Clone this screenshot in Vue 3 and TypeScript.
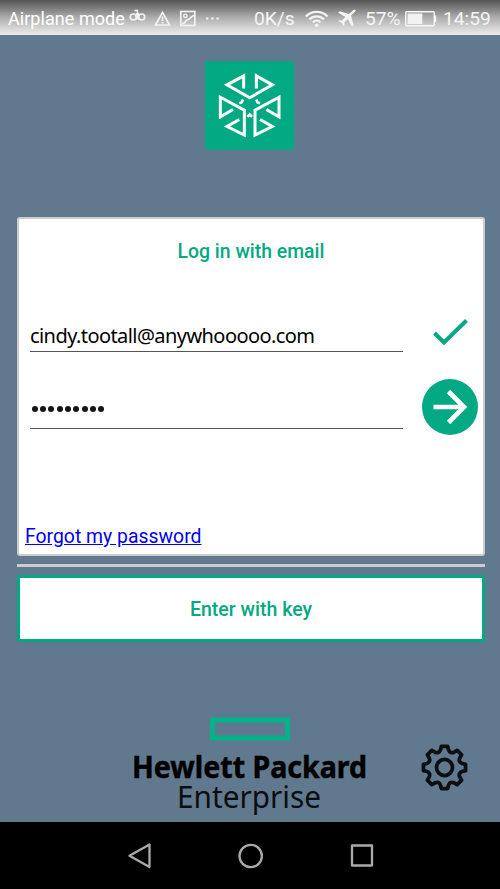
<script setup lang="ts">
import { ref } from 'vue'

const email = ref<string>('cindy.tootall@anywhooooo.com')
const passwordLength = ref<number>(9)
const batteryLevel = ref<number>(57)

function polar(radius: number, degrees: number): string {
  const a = (degrees * Math.PI) / 180
  return `${(radius * Math.sin(a)).toFixed(2)} ${(-radius * Math.cos(a)).toFixed(2)}`
}

// Eight-toothed cog outline, centred on the origin.
function cogPath(): string {
  let d = ''
  for (let k = 0; k < 8; k++) {
    const a = k * 45
    d += `${k === 0 ? 'M' : 'L'}${polar(62.5, a - 8.5)} L${polar(62.5, a + 8.5)} L${polar(53, a + 13)} `
    d += `Q${polar(43, a + 22.5)} ${polar(53, a + 32)} `
  }
  return d + 'Z'
}
const cog: string = cogPath()
</script>

<template>
  <div class="screen">
    <header class="status">
      <span class="carrier">Airplane mode</span>
      <svg class="notices" viewBox="128 4 96 28" width="96" height="28" fill="none" stroke="#f1f1f1" stroke-width="1.7">
        <circle cx="133.3" cy="16" r="3" />
        <circle cx="141.7" cy="16" r="3" />
        <path d="M134.500 9.500h3v8.500M138.500 12v7M136.500 12v7" stroke-width="1.300" />
        <path d="M162.500 11.500L169.500 24H155.500Z" />
        <path d="M162.500 15.500v4.500M162.500 21v1.500" />
        <rect x="180.800" y="10.500" width="14" height="14" />
        <circle cx="185.300" cy="14.800" r="1.700" stroke-width="1.400" />
        <path d="M182 23c4-1 3-4 6-4.500s3-4 6.500-4" />
        <path d="M206 17.500h2.400M211.200 17.500h2.400M216.400 17.500h2.400" stroke-width="2.200" />
      </svg>
      <span class="rate">0K/s</span>
      <svg class="radio" viewBox="304 4 56 28" width="56" height="28" fill="none" stroke="#f3f3f3" stroke-width="2.200">
        <path d="M305.800 15.500a15.200 15.200 0 0 1 21.800 0M309.300 18.500a10.500 10.500 0 0 1 14.800 0M312.800 21.200a5.800 5.800 0 0 1 7.800 0" />
        <circle cx="316.700" cy="24.200" r="1.800" fill="#f3f3f3" stroke="none" />
        <path d="M355.500 9.200c-1-.8-2.200-.2-3.200.7l-3.300 3.100-9.300-2.700-1.500 1.500 7.200 4.200-3.400 3.600-2.700-.4-1 1 3.600 1.600 1.600 3.500 1.100-1-.3-2.800 3.600-3.300 4.100 7.200 1.500-1.500-2.500-9.300 3.200-3.200c1-1 1.800-1.400 1.300-2.200Z" fill="#f3f3f3" stroke="none" />
      </svg>
      <span class="percent">{{ batteryLevel }}%</span>
      <svg class="battery" viewBox="0 0 32 16" width="32" height="16">
        <rect x="0.700" y="0.700" width="28.600" height="14.100" rx="1" fill="none" stroke="#f7f7f7" stroke-width="1.400" />
        <rect x="2.500" y="2.500" :width="batteryLevel * 0.26" height="10.500" fill="#f2f2f2" />
        <rect x="29.700" y="4.500" width="1.500" height="6.500" fill="#f7f7f7" />
      </svg>
      <span class="clock">14:59</span>
    </header>

    <main class="content">
      <svg class="app-logo" viewBox="30 28 267 266" width="89" height="89">
        <rect x="30" y="28" width="267" height="266" fill="#03a982" />
        <g fill="none" stroke="#fff" stroke-width="9">
          <path d="M146 110V72L96 99L164 138L232 99L184 72V110" />
          <path d="M114 173L76 195V136L148 175V250L96 224L133 203" />
          <path d="M214 173L252 195V136L180 175V250L232 224L195 203" />
          <path d="M133 154L140 152L144 143M195 154L188 152L184 143M157 195L164 188L171 195" stroke-width="8" />
        </g>
      </svg>

      <section class="card">
        <h1 class="title"><span>Log in with email</span></h1>
        <div class="row first">
          <div class="field"><span class="email">{{ email }}</span></div>
          <svg class="check" viewBox="0 0 36 28" width="36" height="28">
            <path d="M1.500 15L11 24.500L33.500 2.500" fill="none" stroke="#03a982" stroke-width="4" />
          </svg>
        </div>
        <div class="row second">
          <div class="field">
            <span class="dots"><i v-for="n in passwordLength" :key="n"></i></span>
          </div>
          <svg class="go" viewBox="0 0 56 56" width="56" height="56">
            <circle cx="28" cy="28" r="28" fill="#03a982" />
            <path d="M11.500 28H42M26.500 12.500L42 28L26.500 43.500" fill="none" stroke="#fff" stroke-width="4.600" />
          </svg>
        </div>
        <a class="forgot">Forgot my password</a>
      </section>

      <div class="divider"></div>
      <button class="key"><span>Enter with key</span></button>

      <footer class="footer">
        <svg class="brand" viewBox="0 0 260 119" width="260" height="119">
          <rect x="92.500" y="15" width="75" height="18" fill="none" stroke="#01b388" stroke-width="5" />
          <text class="strong" x="12" y="73" textLength="235" lengthAdjust="spacingAndGlyphs">Hewlett Packard</text>
          <text class="light" x="57" y="103" textLength="144" lengthAdjust="spacingAndGlyphs">Enterprise</text>
        </svg>
        <svg class="settings" viewBox="-69 -69 138 138" width="47" height="47">
          <path :d="cog" fill="none" stroke="#0c0f11" stroke-width="11" stroke-linejoin="round" />
          <circle r="23.500" fill="none" stroke="#0c0f11" stroke-width="11" />
        </svg>
      </footer>
    </main>

    <nav class="nav">
      <svg viewBox="0 0 26 28" width="26" height="28"><path d="M22.500 2.500V25L2.500 13.750Z" /></svg>
      <svg viewBox="0 0 26 28" width="26" height="28"><circle cx="12.700" cy="14" r="11.200" /></svg>
      <svg viewBox="0 0 26 28" width="26" height="28"><rect x="3" y="3.500" width="20" height="20" /></svg>
    </nav>
  </div>
</template>

<style>
body {
  margin: 0;
}
</style>

<style scoped>
.screen {
  width: 500px;
  height: 889px;
  display: flex;
  flex-direction: column;
  overflow: hidden;
  background: #61798e;
  font-family: Roboto, "Liberation Sans", sans-serif;
}
.status {
  box-sizing: border-box;
  height: 35px;
  flex: none;
  display: flex;
  align-items: center;
  padding: 2px 0 0 8px;
  background: linear-gradient(#555 0, #777 20%, #adadad 50%, #d5d5d5 80%, #ebebeb 100%);
  color: #f5f5f5;
  font-size: 19.200px;
  line-height: 32px;
  white-space: nowrap;
}
.carrier {
  width: 120px;
  font-size: 18px;
  color: #fff;
  letter-spacing: 0.050px;
}
.notices {
  width: 96px;
}
.rate {
  width: 50px;
  margin-left: 30px;
}
.percent {
  width: 40px;
  margin-left: 5px;
}
.battery {
  flex: none;
}
.clock {
  margin-left: 6px;
}
.content {
  height: 787px;
  flex: none;
  display: flex;
  flex-direction: column;
  align-items: center;
}
.app-logo {
  flex: none;
  margin: 26px 1px 67px 0;
}
.card {
  box-sizing: border-box;
  width: 468px;
  height: 339px;
  margin-left: 2px;
  flex: none;
  border: 2px solid #ccc;
  border-radius: 3px;
  background: #fff;
}
.title {
  margin: 20px 0 0;
  height: 25px;
  line-height: 26px;
  font-size: 19.400px;
  font-weight: 500;
  color: #03a982;
  text-align: center;
}
.row {
  display: flex;
  padding-left: 11px;
}
.field {
  box-sizing: border-box;
  width: 373px;
  border-bottom: 1px solid #555;
}
.first {
  height: 88px;
}
.first .field {
  display: flex;
  align-items: flex-end;
}
.email {
  font-family: "Noto Sans", sans-serif;
  font-size: 20px;
  line-height: 30px;
  letter-spacing: -0.570px;
  color: #000;
  white-space: nowrap;
}
.check {
  margin: 54px 0 0 30px;
}
.second {
  height: 77px;
}
.second .field {
  display: flex;
  padding: 54px 0 0 1.500px;
}
.dots {
  display: flex;
  gap: 2.350px;
}
.dots i {
  width: 6px;
  height: 6px;
  border-radius: 50%;
  background: #151515;
}
.go {
  margin: 27px 0 0 19px;
}
.forgot {
  display: block;
  margin: 95px 0 0 6px;
  font-size: 19.400px;
  line-height: 26px;
  color: #00e;
  text-decoration: underline;
}
.divider {
  width: 468px;
  height: 3px;
  margin: 8px 0 8px 2px;
  flex: none;
  background: #ccc;
}
.key {
  box-sizing: border-box;
  width: 468px;
  height: 67px;
  margin: 0 0 0 2px;
  padding: 1px 0 0;
  flex: none;
  border: 3px solid #03a982;
  border-radius: 2px;
  background: #fff;
  color: #03a982;
  font-family: inherit;
  font-size: 19.500px;
  font-weight: 500;
}
.footer {
  width: 500px;
  display: flex;
  padding-top: 63px;
}
.brand {
  margin-left: 120px;
  flex: none;
  overflow: visible;
}
.strong {
  font: 700 31px "Noto Sans", sans-serif;
  stroke: #000;
  stroke-width: 0.500px;
}
.light {
  font: 400 31px "Noto Sans", sans-serif;
  fill: #0b0e10;
}
.settings {
  margin: 38.500px 0 0 41px;
}
.nav {
  height: 67px;
  flex: none;
  display: flex;
  align-items: center;
  gap: 85px;
  padding-left: 127px;
  background: #000;
}
.nav path,
.nav circle,
.nav rect {
  fill: none;
  stroke: #aaa;
  stroke-width: 2.300;
  stroke-linejoin: round;
}
</style>
